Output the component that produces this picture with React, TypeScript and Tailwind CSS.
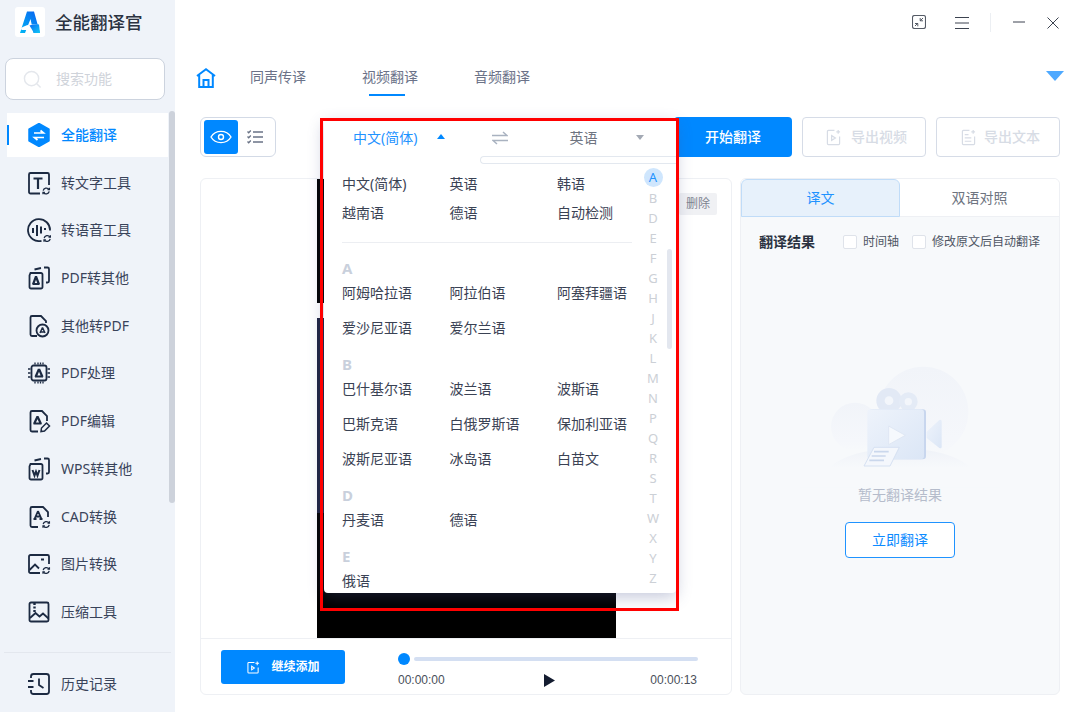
import type { ReactNode } from "react";

const navIcon = "w-6 h-6 shrink-0 fill-none stroke-[#1c2a42] stroke-[1.8]";

// little refresh badge shared by the tool icons
function Cycle({ x = 0, y = 0 }: { x?: number; y?: number }) {
  return (
    <g transform={`translate(${x} ${y})`} strokeWidth="1.3">
      <path d="M15.2 18.6a3.2 3 0 0 1 5.8-1.2M21.2 19.4a3.2 3 0 0 1-5.8 1.2" />
      <path d="M21.4 15.8v1.9h-1.9M15 22.2v-1.9h1.9" />
    </g>
  );
}

const icons: Record<string, ReactNode> = {
  text: (
    <svg viewBox="0 0 24 24" className={navIcon}>
      <path d="M13 22.5H3.5a1.5 1.5 0 0 1-1.5-1.5V3.500A1.5 1.5 0 0 1 3.5 2h17A1.5 1.5 0 0 1 22 3.500V14" />
      <path strokeWidth="2.200" d="M6.500 7.500h9M11 7.500V18" />
      <Cycle x={1} y={1} />
    </svg>
  ),
  voice: (
    <svg viewBox="0 0 24 24" className={navIcon}>
      <path d="M14.500 22.800A11 11 0 1 1 23 12.500" />
      <path strokeWidth="2" d="M6 10v5M10 7v11M14 8.500v7M18 10v2" />
      <Cycle x={2} y={1.500} />
    </svg>
  ),
  pdfOut: (
    <svg viewBox="0 0 24 24" className={navIcon}>
      <path d="M3.500 7H14a1.500 1.500 0 0 1 1.500 1.500V21a1.500 1.500 0 0 1-1.500 1.500H4A1.500 1.500 0 0 1 2.500 21V9.500Z" />
      <path d="M7.500 3.500 14 2M17 1.500h3.500a1.500 1.500 0 0 1 1.500 1.500V15a1.500 1.500 0 0 1-1.500 1.500H19" />
      <path strokeWidth="2.200" d="M9 10.500 6 18.500M9 10.500l3 8M5.500 18h7" />
    </svg>
  ),
  pdfIn: (
    <svg viewBox="0 0 24 24" className={navIcon}>
      <path d="M10 22H5a1.500 1.500 0 0 1-1.500-1.500V3.500A1.500 1.500 0 0 1 5 2h9l5 5v2" />
      <circle cx="15.500" cy="16.500" r="6" />
      <path strokeWidth="1.500" d="M15.500 13.500 13 19M15.500 13.500l2.500 5.500M12.800 18h5.400" />
    </svg>
  ),
  chip: (
    <svg viewBox="0 0 24 24" className={navIcon}>
      <rect x="4.500" y="4.500" width="15" height="15" rx="2" />
      <path strokeWidth="2.200" d="M12 8 8.500 16M12 8l3.500 8M8 15.500h8" />
      <path strokeWidth="1.300" d="M8 1.500v2M11 1.500v2M13.500 1.500v2M16 1.500v2M8 20.500v2M11 20.500v2M13.500 20.500v2M16 20.500v2M1 8h2.500M1 12h2.500M1 16h2.500M20.500 8H23M20.500 12H23M20.500 16H23" />
    </svg>
  ),
  pdfEdit: (
    <svg viewBox="0 0 24 24" className={navIcon}>
      <path d="M11 22.500H5a1.500 1.500 0 0 1-1.500-1.500V3.500A1.500 1.500 0 0 1 5 2h10l5 5v5" />
      <path strokeWidth="2.200" d="M10.500 7.500 7 15M10.500 7.500 14 15M6.500 14.500h8" />
      <path strokeWidth="1.500" d="m14 22.500.5-3.500 5-5 3 3-5 5Z" />
    </svg>
  ),
  wps: (
    <svg viewBox="0 0 24 24" className={navIcon}>
      <path d="M3.500 7H14a1.500 1.500 0 0 1 1.500 1.500V21a1.500 1.500 0 0 1-1.500 1.500H4A1.500 1.500 0 0 1 2.500 21V9.500Z" />
      <path d="M7.500 3.500 14 2M17 1.500h3.500A1.500 1.500 0 0 1 22 3v12a1.500 1.500 0 0 1-1.500 1.500H19" />
      <path strokeWidth="2" d="m5.500 13 2 5.500 1.500-4 1.500 4 2-5.500" />
    </svg>
  ),
  cad: (
    <svg viewBox="0 0 24 24" className={navIcon}>
      <path d="M11 22H5a1.500 1.500 0 0 1-1.500-1.500V3.500A1.500 1.500 0 0 1 5 2h11l5 5v5" />
      <path strokeWidth="1.800" d="M11 6 7.500 14M11 6l3.500 8M6.500 14h3M12.500 14h3M8.500 11.500h5" />
      <Cycle x={1} y={0.500} />
    </svg>
  ),
  image: (
    <svg viewBox="0 0 24 24" className={navIcon}>
      <path d="M13 21H3.500A1.500 1.500 0 0 1 2 19.500v-15A1.500 1.500 0 0 1 3.500 3h17A1.500 1.500 0 0 1 22 4.500V12" />
      <path d="m2.500 18 5.500-5.500 4 4" />
      <path strokeWidth="2" d="M14 7.500h3" />
      <Cycle x={1} y={-0.500} />
    </svg>
  ),
  zip: (
    <svg viewBox="0 0 24 24" className={navIcon}>
      <rect x="2.500" y="2.500" width="19" height="19" rx="1.500" />
      <path d="m3 18 5.500-5 4 3.500 3.500-3 5.500 5" />
      <path strokeWidth="2.400" strokeDasharray="2 1.500" d="M7.500 3v9" />
    </svg>
  ),
  history: (
    <svg viewBox="0 0 24 24" className={navIcon}>
      <path d="M4 6V4.500A2.500 2.500 0 0 1 6.500 2h13A2.500 2.500 0 0 1 22 4.500v15a2.500 2.500 0 0 1-2.500 2.500h-13A2.500 2.500 0 0 1 4 19.500V18" />
      <path d="M1 9h5.500M1 15h5.500" />
      <path strokeWidth="1.800" d="M12 6.500V13l4.500 3" />
    </svg>
  ),
};

const navItems: [string, string][] = [
  ["text", "转文字工具"],
  ["voice", "转语音工具"],
  ["pdfOut", "PDF转其他"],
  ["pdfIn", "其他转PDF"],
  ["chip", "PDF处理"],
  ["pdfEdit", "PDF编辑"],
  ["wps", "WPS转其他"],
  ["cad", "CAD转换"],
  ["image", "图片转换"],
  ["zip", "压缩工具"],
];

function Logo() {
  return (
    <div className="w-[30px] h-[30px] bg-white rounded-[3px] flex items-center justify-center">
      <svg viewBox="0 0 30 30" className="w-[30px] h-[30px]">
        <defs>
          <linearGradient id="logoA" x1="0" y1="1" x2="1" y2="0">
            <stop offset="0" stopColor="#00b8f5" />
            <stop offset="1" stopColor="#0a5cf0" />
          </linearGradient>
          <linearGradient id="logoB" x1="0" y1="0" x2="1" y2="1">
            <stop offset="0" stopColor="#0a6cf5" />
            <stop offset="1" stopColor="#10c8f5" />
          </linearGradient>
        </defs>
        <path d="M12 4.500h7L25 26h-6.500L15.500 12 10 26H5Z" fill="url(#logoA)" />
        <path d="M6 21c5-3.500 10-4.500 18-3.500-5 .2-9 1.500-12 5.500H6.500Z" fill="#fff" />
        <path d="M14.500 18.500c3-1.200 6-1.400 9.500-1l1 8.500h-6Z" fill="url(#logoB)" />
      </svg>
    </div>
  );
}

function Sidebar() {
  return (
    <aside className="w-[175px] shrink-0 h-full bg-[#eff3f9] flex flex-col relative">
      <div className="h-[58px] pl-[15px] pt-[7px] flex items-start gap-[10px]">
        <Logo />
        <span className="text-[17.500px] leading-[30px] font-medium text-[#2a3240]">全能翻译官</span>
      </div>
      <div className="ml-[5px] w-[160px] h-[42px] bg-white border border-[#ccd3de] rounded-lg flex items-center pl-[17px] gap-[14px]">
        <svg viewBox="0 0 20 20" className="w-[19px] h-[19px] fill-none stroke-[#e4e7ec] stroke-[1.500]">
          <circle cx="9" cy="9" r="7.500" />
          <path d="m14.500 14.500 4 4" />
        </svg>
        <span className="text-sm text-[#cfd3da]">搜索功能</span>
      </div>
      <nav className="mt-[13px] ml-[7px] w-[161px] flex flex-col gap-[3.700px]">
        <div className="relative h-11 bg-white flex items-center pl-[21px] gap-[11px]">
          <span className="absolute left-0 top-[12px] w-[2px] h-5 bg-[#0088ff]" />
          <svg viewBox="1 0 22 24" className="w-[22px] h-6 shrink-0">
            <path d="M12 .500 22 6.200v11.600L12 23.500 2 17.800V6.200Z" fill="#0088ff" stroke="#0088ff" strokeWidth="1.500" strokeLinejoin="round" />
            <path d="M7 10h9.500l-3-2.500M17 14.500H7.500l3 2.500" fill="none" stroke="#fff" strokeWidth="1.700" />
          </svg>
          <span className="text-sm font-medium text-[#0088ff]">全能翻译</span>
        </div>
        {navItems.map(([icon, label]) => (
          <div key={label} className="h-11 flex items-center pl-[20px] gap-[10px]">
            {icons[icon]}
            <span className="text-sm text-[#39435a]">{label}</span>
          </div>
        ))}
      </nav>
      <div className="mt-auto mx-[4px] border-t border-[#e3e7ee]" />
      <div className="h-[59px] flex items-center pl-[27px] pt-[2px] gap-[10px]">
        {icons.history}
        <span className="text-sm text-[#39435a]">历史记录</span>
      </div>
      <div className="absolute right-0 top-[111px] w-[6px] h-[392px] bg-[#cdd2db] rounded-[3px]" />
    </aside>
  );
}

function TitleBar() {
  return (
    <div className="h-[58px] flex items-start justify-end pt-[15px] pr-[7px]">
      <svg viewBox="0 0 14 14" className="w-[14px] h-[14px] fill-none stroke-[#555b66]">
        <rect x=".500" y=".500" width="13" height="13" rx="2" strokeWidth="1.100" />
        <path d="m3 11 3-3M3 8.500h2.800v2.800M11 3 8 6M8.200 3v2.800H11" strokeWidth="1" />
      </svg>
      <svg viewBox="0 0 14 12" className="ml-[29px] mt-[2px] w-[14px] h-[12px] stroke-[#3c4350]">
        <path d="M0 .500h14M0 6h14M0 11.500h14" />
      </svg>
      <div className="ml-[21px] -mt-[2px] w-px h-[19px] bg-[#eceff3]" />
      <svg viewBox="0 0 12 2" className="ml-[22px] mt-[6px] w-[12px] h-[2px] stroke-[#3c4350]">
        <path d="M0 1h12" />
      </svg>
      <svg viewBox="0 0 12 12" className="ml-[22px] mt-[2px] w-[12px] h-[12px] stroke-[#3c4350]">
        <path d="m.500.500 11 11M11.500.500l-11 11" />
      </svg>
    </div>
  );
}

function TabRow() {
  return (
    <div className="h-[59px] flex pl-[21px] pr-[2px]">
      <svg viewBox="0 0 20 20" className="mt-[10px] w-[20px] h-[20px] fill-none stroke-[#0088ff] stroke-2">
        <path d="M1 8 10 1.300 19 8M3.200 6.800V19h13.600V6.800" />
        <path d="M7.500 19v-7h5v7" />
      </svg>
      <div className="ml-[34px] flex gap-[56px]">
        <div className="h-[38px] flex items-center text-sm text-[#6b7288]">同声传译</div>
        <div className="relative h-[38px] flex items-center text-sm text-[#6b7288]">
          视频翻译
          <span className="absolute left-[7px] top-[36px] w-[36px] h-[2px] bg-[#0088ff]" />
        </div>
        <div className="h-[38px] flex items-center text-sm text-[#6b7288]">音频翻译</div>
      </div>
      <span className="ml-auto mt-[13px] w-0 h-0 border-x-[9px] border-x-transparent border-t-[10px] border-t-[#4ea9ff]" />
    </div>
  );
}

function ExportButton({ label, video }: { label: string; video?: boolean }) {
  return (
    <button className={video ? "w-[124px] h-10 border border-[#d6dce7] rounded-[4px] flex items-center pl-[23px] gap-[10px] text-sm font-medium text-[#d7dce5]" : "w-[124px] h-10 border border-[#d6dce7] rounded-[4px] flex items-center pl-[24px] gap-[8px] text-sm font-medium text-[#d7dce5]"}>
      <svg viewBox="0 0 16 18" className="w-[15px] h-[17px] fill-none stroke-[#d7dce5] stroke-[1.300]">
        <path d="M9 1.500H2.500a1 1 0 0 0-1 1v13a1 1 0 0 0 1 1h11a1 1 0 0 0 1-1V8" />
        {video ? <path d="m6 7 4 2.500L6 12Z" /> : <path d="M4 6h4M4 9.500h7M4 13h7" />}
        <path d="M13 1v4M11 3h4" />
      </svg>
      {label}
    </button>
  );
}

function Toolbar() {
  return (
    <div className="h-10 flex items-center">
      <div className="w-[76px] h-10 border border-[#d3dae6] rounded-[6px] flex items-center pl-[3px]">
        <div className="w-[34px] h-[34px] bg-[#0088ff] rounded-[3px] flex items-center justify-center">
          <svg viewBox="0 0 22 14" className="w-[22px] h-[14px] fill-none stroke-white stroke-[1.400]">
            <path d="M1 7c4.500-7.500 15.500-7.500 20 0-4.500 7.500-15.500 7.500-20 0Z" />
            <circle cx="11" cy="7" r="2.500" />
          </svg>
        </div>
        <svg viewBox="0 0 16 14" className="ml-[9px] w-[16px] h-[14px] fill-none stroke-[#6a7386] stroke-[1.300]">
          <path d="M6 2h10M6 7h10M6 12h10M.500 1.500l1.200 1.200L3.800.500M.500 6.500l1.200 1.200 2.100-2.200M.500 11.500l1.200 1.200 2.100-2.200" />
        </svg>
      </div>
      <div className="flex-1" />
      <button className="w-[118px] h-10 bg-[#0088ff] rounded-[4px] text-sm font-medium text-white flex items-center justify-center">开始翻译</button>
      <div className="ml-[10px] flex gap-[10px]">
        <ExportButton label="导出视频" video />
        <ExportButton label="导出文本" />
      </div>
    </div>
  );
}

function VideoPanel() {
  return (
    <section className="relative w-[532px] h-full bg-white border border-[#eef0f4] rounded-[6px] flex flex-col">
      <div className="flex-1 min-h-0 pl-[116px]">
        <div className="w-[299px] h-full bg-black flex flex-col">
          <div className="h-[124px] shrink-0" />
          <div className="h-[15px] shrink-0 bg-white" />
          <div className="h-[195px] shrink-0 bg-[#1e2340]" />
        </div>
      </div>
      <button className="absolute right-[14px] top-[14px] w-[38px] h-[22px] bg-[#f0f1f4] rounded-[2px] text-xs text-[#7d8390] flex items-center justify-center">删除</button>
      <div className="h-[56px] shrink-0 border-t border-[#eef0f4] flex pl-[20px] pt-[11px]">
        <button className="w-[124px] h-[34px] bg-[#0088ff] rounded-[3px] flex items-center justify-center pl-px gap-[11px] text-xs font-bold text-white">
          <svg viewBox="0 0 14 14" className="w-[13px] h-[13px] fill-none stroke-white stroke-[1.100]">
            <path d="M8 1.500H2a1 1 0 0 0-1 1v9.500a1 1 0 0 0 1 1h9a1 1 0 0 0 1-1V7" />
            <path d="m5 5.500 3 2-3 2ZM11 .500v4M9 2.500h4" />
          </svg>
          继续添加
        </button>
        <div className="ml-[53px] mt-[3px] w-[300px]">
          <div className="flex items-center h-3 gap-[4px]">
            <span className="w-3 h-3 rounded-full bg-[#0088ff] shrink-0" />
            <span className="w-[284px] h-1 rounded-sm bg-[#d4dff2]" />
          </div>
          <div className="mt-[7px] flex items-center justify-between pr-[1px] h-[15px] text-xs font-['Liberation_Sans',sans-serif] text-[#4a4f5a]">
            <span>00:00:00</span>
            <svg viewBox="0 0 11 13" className="ml-[3px] mt-[2px] w-[11px] h-[13px] fill-[#141c30]">
              <path d="M0 0 11 6.500 0 13Z" />
            </svg>
            <span>00:00:13</span>
          </div>
        </div>
      </div>
    </section>
  );
}

function EmptyArt() {
  return (
    <svg viewBox="0 0 600 300" className="w-[200px] h-[100px] overflow-visible">
      <defs>
        <linearGradient id="cam" x1="0" y1="0" x2="1" y2="1">
          <stop offset="0" stopColor="#eef3fb" />
          <stop offset="1" stopColor="#dbe6f6" />
        </linearGradient>
        <linearGradient id="ground" gradientUnits="userSpaceOnUse" x1="0" y1="235" x2="0" y2="292">
          <stop offset="0" stopColor="#eff2f8" />
          <stop offset="1" stopColor="#f7f9fb" />
        </linearGradient>
        <linearGradient id="fadeRound" x1="0" y1="0" x2="0" y2="1">
          <stop offset="0" stopColor="#f1f4f9" />
          <stop offset="0.800" stopColor="#f5f7fb" />
          <stop offset="1" stopColor="#f7f9fb" />
        </linearGradient>
      </defs>
      <circle cx="370" cy="125" r="135" fill="url(#fadeRound)" />
      <circle cx="165" cy="170" r="72" fill="url(#fadeRound)" />
      <ellipse cx="300" cy="325" rx="225" ry="90" fill="url(#ground)" />
      <rect x="0" y="292" width="600" height="60" fill="#f7f9fb" />
      <circle cx="267" cy="92" r="38" fill="#e2e9f5" />
      <circle cx="267" cy="92" r="13" fill="#f3f6fb" />
      <circle cx="325" cy="95" r="28" fill="#e4ebf6" />
      <circle cx="325" cy="95" r="11" fill="#f3f6fb" />
      <rect x="207" y="118" width="171" height="150" rx="10" fill="#c8d6ee" />
      <rect x="202" y="118" width="170" height="150" rx="10" fill="url(#cam)" />
      <path d="M380 185 418 150q7-3 7 5v75q0 7-7 4l-38-30Z" fill="url(#cam)" />
      <path d="M266 168 316 196 266 224Z" fill="#f6f9fd" stroke="#dfe7f4" strokeWidth="3" strokeLinejoin="round" />
      <path d="M222 232h76l-28 56H192Z" fill="#f4f7fc" stroke="#d6e1f2" strokeWidth="3" strokeLinejoin="round" />
      <path d="M222 245h44M215 258h42M208 271h44" stroke="#cad7ec" strokeWidth="5" />
    </svg>
  );
}

function ResultPanel() {
  return (
    <section className="w-[320px] h-full bg-[#f7f9fb] border border-[#eef0f4] rounded-[6px] flex flex-col overflow-hidden">
      <div className="h-[38px] shrink-0 flex bg-white border-b border-[#eef0f4]">
        <div className="w-[159px] h-[38px] bg-[#e7f1fb] border border-[#c0dcf8] rounded-t-[6px] flex items-center justify-center text-sm text-[#1f93ff]">译文</div>
        <div className="flex-1 flex items-center justify-center text-sm text-[#6e7480]">双语对照</div>
      </div>
      <div className="h-[50px] shrink-0 flex items-center pl-[18px]">
        <span className="text-sm font-bold text-[#2a3240]">翻译结果</span>
        <span className="ml-[28px] w-[14px] h-[14px] bg-white border border-[#dfe3ea] rounded-[2px]" />
        <span className="ml-[6px] text-xs text-[#4f5664]">时间轴</span>
        <span className="ml-[13px] w-[14px] h-[14px] bg-white border border-[#dfe3ea] rounded-[2px]" />
        <span className="ml-[6px] text-xs text-[#4f5664]">修改原文后自动翻译</span>
      </div>
      <div className="flex flex-col items-center">
        <div className="mt-[103px]"><EmptyArt /></div>
        <div className="mt-[15px] h-5 flex items-center text-sm text-[#b5bccb]">暂无翻译结果</div>
        <button className="mt-[17px] w-[110px] h-9 bg-white border border-[#1f93ff] rounded-[4px] text-sm text-[#0d8bff]">立即翻译</button>
      </div>
    </section>
  );
}

const letters = ["A", "B", "D", "E", "F", "G", "H", "J", "K", "L", "M", "N", "P", "Q", "R", "S", "T", "W", "X", "Y", "Z"];

const groups: [string, string[]][] = [
  ["A", ["阿姆哈拉语", "阿拉伯语", "阿塞拜疆语", "爱沙尼亚语", "爱尔兰语"]],
  ["B", ["巴什基尔语", "波兰语", "波斯语", "巴斯克语", "白俄罗斯语", "保加利亚语", "波斯尼亚语", "冰岛语", "白苗文"]],
  ["D", ["丹麦语", "德语"]],
  ["E", ["俄语"]],
];

function LanguageMenu() {
  return (
    <div className="absolute left-[324px] top-[120px] w-[352px] h-[473px] bg-white rounded-b-[4px] shadow-[0_4px_16px_rgba(70,85,140,0.32)] flex flex-col overflow-hidden">
      <div className="h-[36px] shrink-0 flex items-center">
        <span className="ml-[29px] text-sm text-[#1f93ff]">中文(简体)</span>
        <span className="ml-[20px] -mt-[4px] w-0 h-0 border-x-[4px] border-x-transparent border-b-[5px] border-b-[#0088ff]" />
        <svg viewBox="0 0 16 14" className="ml-[47px] w-[16px] h-[14px] fill-none stroke-[#a9b2c0] stroke-[1.500]">
          <path d="M0 4.500h15L11 1M16 9.500H1L5 13" />
        </svg>
        <span className="ml-[61px] text-sm text-[#6e7480]">英语</span>
        <span className="ml-[39px] -mt-[1px] w-0 h-0 border-x-[4px] border-x-transparent border-t-[5px] border-t-[#a3a9b4]" />
      </div>
      <div className="self-end w-[196px] h-[8px] shrink-0 border border-r-0 border-[#e3e8ef] rounded-l-[4px]" />
      <div className="flex flex-1 min-h-0">
        <div className="w-[319px] shrink-0 pl-[18px] pt-[8px] text-sm text-[#3a4254]">
          <div className="grid grid-cols-[107.500px_107.500px_107.500px] gap-y-[5px]">
            {["中文(简体)", "英语", "韩语", "越南语", "德语", "自动检测"].map((name) => (
              <div key={name} className="h-6 flex items-center">{name}</div>
            ))}
          </div>
          <div className="mt-[17px] w-[290px] border-t border-[#eceef2]" />
          <div className="mt-[14px] flex flex-col gap-[13px]">
            {groups.map(([letter, names]) => (
              <div key={letter}>
                <div className="h-6 flex items-center text-[15px] font-bold text-[#c9d0dc]">{letter}</div>
                <div className="grid grid-cols-[107.500px_107.500px_107.500px] gap-y-[11px]">
                  {names.map((name) => (
                    <div key={name} className="h-6 flex items-center">{name}</div>
                  ))}
                </div>
              </div>
            ))}
          </div>
        </div>
        <div className="w-5 shrink-0 pt-[4px] flex flex-col items-center text-[13px] leading-none text-[#ccd0d6]">
          {letters.map((l, i) => (
            <div key={l} className={i === 0 ? "w-[19px] h-[19px] mb-px flex items-center justify-center rounded-full bg-[#cfe6fd] text-[#1f93ff]" : "h-5 pt-px flex items-center justify-center"}>{l}</div>
          ))}
        </div>
        <div className="ml-[4px] mt-[85px] w-[5px] h-[100px] rounded-[3px] bg-[#e3e7ef]" />
      </div>
    </div>
  );
}

export default function App() {
  return (
    <div className="relative w-[1066px] h-[712px] bg-white overflow-hidden flex font-['Noto_Sans','Noto_Sans_CJK_SC',sans-serif]">
      <Sidebar />
      <main className="flex-1 min-w-0 h-full flex flex-col">
        <TitleBar />
        <TabRow />
        <div className="pl-[25px] pr-[6px]">
          <Toolbar />
        </div>
        <div className="mt-[21px] h-[517px] pl-[25px] pr-[6px] flex gap-[8px]">
          <VideoPanel />
          <ResultPanel />
        </div>
      </main>
      <LanguageMenu />
      {/* red annotation box from the reference */}
      <div className="absolute left-[320px] top-[118px] w-[359px] h-[493px] border-[3px] border-[#ff0000] pointer-events-none" />
    </div>
  );
}
